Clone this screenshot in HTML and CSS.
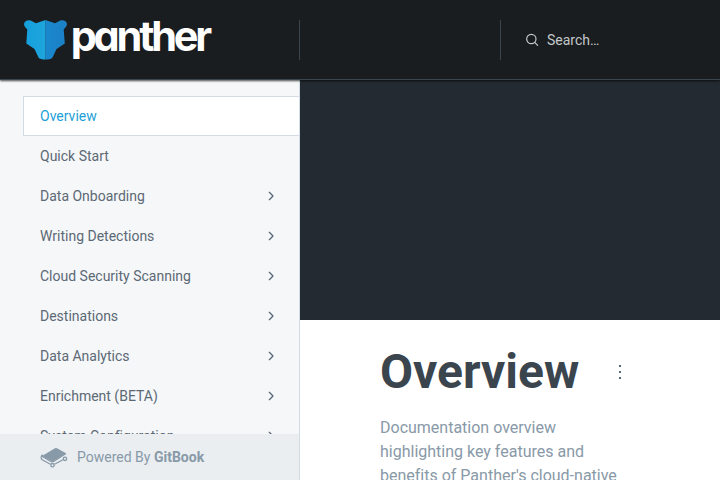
FILE: index.html
```html
<!DOCTYPE html>
<html lang="en">
<head>
<meta charset="utf-8">
<title>Overview - Panther</title>
<link rel="stylesheet" href="styles.css">
</head>
<body>
<svg class="defs" aria-hidden="true"><symbol id="chevron" viewBox="0 0 24 24"><path d="M9.500 17.500l5.500-5.500-5.500-5.500"/></symbol></svg>
<header class="header">
  <a class="brand">
    <svg width="200" height="60" viewBox="20 10 200 60">
      <defs>
        <linearGradient id="left"><stop offset="0" stop-color="#149fdc"/><stop offset="1" stop-color="#20a5dd"/></linearGradient>
        <linearGradient id="right"><stop offset="0" stop-color="#1a87cc"/><stop offset="1" stop-color="#1c80c6"/></linearGradient>
      </defs>
      <path fill="url(#left)" d="M45.600 20L36 23.300L32.500 21.500C30 19.500 26 20 24.500 22.500C23.200 25 25 27 27.300 29.500L26.300 43.500L34.500 49L38.500 57.500Q40 59.600 45.600 59.600Z"/>
      <path fill="url(#right)" d="M45.500 20L55 23.300L58.500 21.500C61 19.500 65 20 66.500 22.500C67.800 25 66 27 63.700 29.500L64.800 43.500L56.500 49L52.500 57.500Q51 59.600 45.500 59.600Z"/>
      <text class="wordmark" x="70.700" y="51" textLength="141.500">panther</text>
    </svg>
  </a>
  <div class="header-main"></div>
  <div class="search">
    <svg width="16" height="16" viewBox="0 0 24 24"><circle cx="11" cy="10.500" r="7"/><path d="M16 15.500L20.500 20"/></svg>
    <span>Search…</span>
  </div>
</header>
<div class="body">
  <aside class="sidebar">
    <nav class="nav">
      <a class="item active">Overview</a>
      <a class="item">Quick Start</a>
      <a class="item">Data Onboarding<svg class="chevron"><use href="#chevron"/></svg></a>
      <a class="item">Writing Detections<svg class="chevron"><use href="#chevron"/></svg></a>
      <a class="item">Cloud Security Scanning<svg class="chevron"><use href="#chevron"/></svg></a>
      <a class="item">Destinations<svg class="chevron"><use href="#chevron"/></svg></a>
      <a class="item">Data Analytics<svg class="chevron"><use href="#chevron"/></svg></a>
      <a class="item">Enrichment (BETA)<svg class="chevron"><use href="#chevron"/></svg></a>
      <a class="item">System Configuration<svg class="chevron"><use href="#chevron"/></svg></a>
    </nav>
    <a class="powered">
      <svg width="28" height="21" viewBox="40 446 28 21">
        <path fill="#8899a8" d="M55 447.200Q56 446.700 57 447.200L66 452.300L53.500 460Q52.300 460.600 51 460L42 455Z"/>
        <g fill="none" stroke="#8899a8" stroke-width="1.300">
          <path d="M43 453.800C40.500 454.500 40.700 458 42.500 459L50.500 463.300M42 455.200L50.500 460.200Q52.300 461.200 54 460.200L66 452.500M54.500 463.300L63 458.700"/>
          <circle cx="52.500" cy="464.200" r="1.700"/><circle cx="65" cy="457.800" r="1.700"/>
        </g>
      </svg>
      <span>Powered By <b>GitBook</b></span>
    </a>
  </aside>
  <main class="content">
    <div class="cover"></div>
    <article class="page">
      <div class="title-row">
        <h1>Overview</h1>
        <svg class="more" width="24" height="24" viewBox="0 0 24 24"><path d="M11 5h2v2h-2zM11 11h2v2h-2zM11 17h2v2h-2z"/></svg>
      </div>
      <p>Documentation overview highlighting key features and benefits of Panther's cloud-native</p>
    </article>
  </main>
</div>
</body>
</html>
```
FILE: styles.css
```css
* { box-sizing: border-box; }
body {
  margin: 0;
  height: 480px;
  overflow: hidden;
  display: flex;
  flex-direction: column;
  font-family: Roboto, sans-serif;
  text-rendering: optimizeSpeed;
  background: #fff;
}
.defs { display: none; }
.header {
  position: relative;
  z-index: 1;
  flex: none;
  display: flex;
  align-items: center;
  height: 80px;
  background: #191d1f;
  border-bottom: 1px solid #3b454e;
  box-shadow: 0 1px 2px rgba(0, 0, 0, .7);
}
.brand {
  display: flex;
  align-items: center;
  width: 300px;
  height: 40px;
  padding-left: 20px;
  border-right: 1px solid #3b454e;
}
.brand svg { flex: none; position: relative; top: .5px; }
.wordmark {
  font-family: Inter, Lato, sans-serif;
  font-feature-settings: "cv11";
  text-rendering: auto;
  font-weight: 700;
  font-size: 41.5px;
  fill: #fff;
}
.header-main { width: 200px; }
.search {
  flex: 1;
  height: 40px;
  display: flex;
  align-items: center;
  gap: 7px;
  padding-left: 23px;
  border-left: 1px solid #3b454e;
  color: #c4c8ca;
  font-size: 14px;
}
.search svg { fill: none; stroke: #c4c8ca; stroke-width: 1.8; stroke-linecap: round; }
.body { flex: 1; min-height: 0; display: flex; }
.sidebar {
  width: 300px;
  flex: none;
  display: flex;
  flex-direction: column;
  background: #f5f7f9;
  border-right: 1px solid #d3dce4;
}
.nav { flex: 1; min-height: 0; overflow: hidden; padding: 16px 0 0 23px; }
.item {
  display: flex;
  align-items: center;
  justify-content: space-between;
  height: 40px;
  padding: 0 20px 0 16px;
  border: 1px solid transparent;
  border-right: 0;
  color: #5c6975;
  font-size: 14px;
}
.active { background: #fff; border-color: #d3dce4; color: #1d9fd8; }
.chevron { width: 16px; height: 16px; fill: none; stroke: #5c6975; stroke-width: 2; stroke-linecap: round; stroke-linejoin: round; }
.powered {
  flex: none;
  height: 46px;
  display: flex;
  align-items: center;
  gap: 9px;
  padding-left: 40px;
  background: #eaeef1;
  color: #8899a8;
  font-size: 14px;
}
.content { flex: 1; min-width: 0; }
.cover { height: 240px; background: #242a31; }
.page { padding: 20px 88px 0 80px; }
.title-row { display: flex; justify-content: space-between; align-items: center; height: 64px; }
h1 { margin: 0; font-size: 48px; line-height: 64px; font-weight: 700; color: #3b454e; }
.more { fill: #5c6975; }
p { margin: 12px 0 0; font-size: 16px; line-height: 24px; color: #8899a8; }
```
